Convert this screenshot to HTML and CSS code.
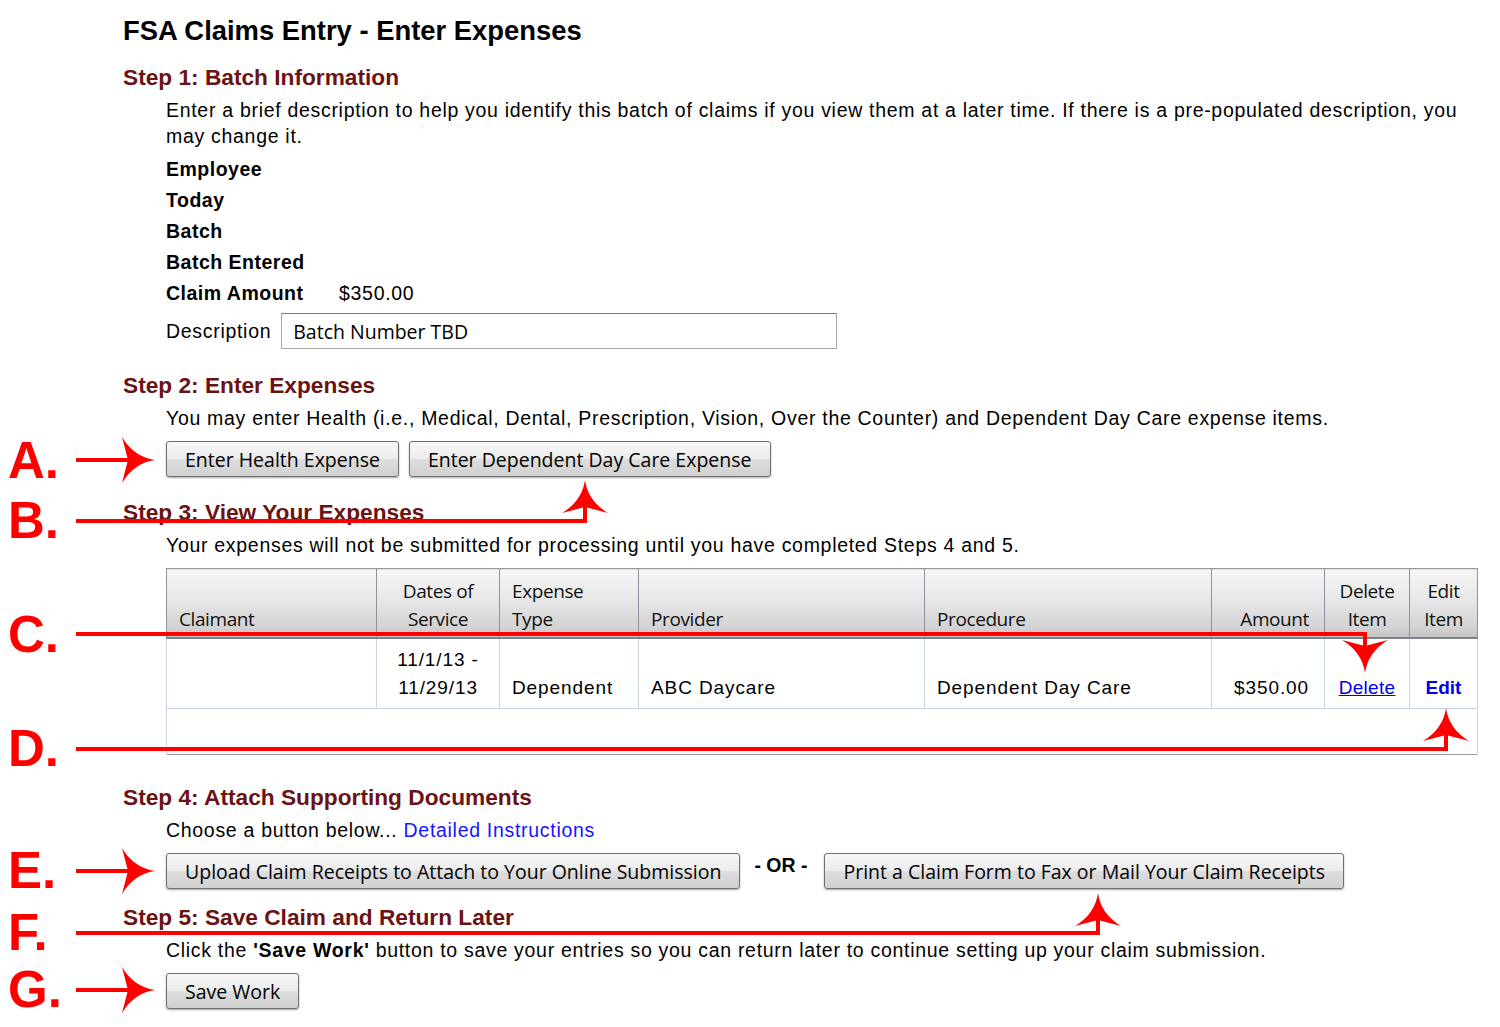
FILE: index.html
```html
<!DOCTYPE html>
<html lang="en">
<head>
  <meta charset="UTF-8" />
  <title>FSA Claims Entry - Enter Expenses</title>
  <link rel="stylesheet" href="styles.css">
</head>
<body>
  <div class="page">
    <h1>FSA Claims Entry - Enter Expenses</h1>

    <h2 class="step step-1">Step 1: Batch Information</h2>
    <div class="indent">
      <p class="intro">Enter a brief description to help you identify this batch of claims if you view them at a later time. If there is a pre-populated description, you may change it.</p>
      <div class="info">
        <div class="info-row"><span class="info-label">Employee</span><span></span></div>
        <div class="info-row"><span class="info-label">Today</span><span></span></div>
        <div class="info-row"><span class="info-label">Batch</span><span></span></div>
        <div class="info-row"><span class="info-label">Batch Entered</span><span></span></div>
        <div class="info-row"><span class="info-label">Claim Amount</span><span>$350.00</span></div>
      </div>
      <div class="desc-row">
        <label for="desc">Description</label>
        <input type="text" id="desc" value="Batch Number TBD">
      </div>
    </div>

    <h2 class="step step-2">Step 2: Enter Expenses</h2>
    <div class="indent">
      <p class="line">You may enter Health (i.e., Medical, Dental, Prescription, Vision, Over the Counter) and Dependent Day Care expense items.</p>
      <div class="btn-row">
        <button class="win-btn">Enter Health Expense</button>
        <button class="win-btn">Enter Dependent Day Care Expense</button>
      </div>
    </div>

    <h2 class="step step-3">Step 3: View Your Expenses</h2>
    <div class="indent">
      <p class="line">Your expenses will not be submitted for processing until you have completed Steps 4 and 5.</p>
      <table class="expenses">
        <colgroup>
          <col style="width:210px"><col style="width:123px"><col style="width:139px"><col style="width:286px">
          <col style="width:287px"><col style="width:113px"><col style="width:85px"><col style="width:68px">
        </colgroup>
        <thead>
          <tr>
            <th>Claimant</th>
            <th class="center">Dates of<br>Service</th>
            <th>Expense<br>Type</th>
            <th>Provider</th>
            <th>Procedure</th>
            <th class="right">Amount</th>
            <th class="center">Delete<br>Item</th>
            <th class="center">Edit<br>Item</th>
          </tr>
        </thead>
        <tbody>
          <tr class="data">
            <td></td>
            <td class="center">11/1/13 -<br>11/29/13</td>
            <td>Dependent</td>
            <td>ABC Daycare</td>
            <td>Dependent Day Care</td>
            <td class="right">$350.00</td>
            <td class="center"><a href="#" class="del-link">Delete</a></td>
            <td class="center"><a href="#" class="edit-link">Edit</a></td>
          </tr>
          <tr class="empty"><td colspan="8"></td></tr>
        </tbody>
      </table>
    </div>

    <h2 class="step step-4">Step 4: Attach Supporting Documents</h2>
    <div class="indent">
      <p class="line">Choose a button below... <a href="#" class="plain-link">Detailed Instructions</a></p>
      <div class="btn-row">
        <button class="win-btn">Upload Claim Receipts to Attach to Your Online Submission</button>
        <span class="or">- OR -</span>
        <button class="win-btn">Print a Claim Form to Fax or Mail Your Claim Receipts</button>
      </div>
    </div>

    <h2 class="step step-5">Step 5: Save Claim and Return Later</h2>
    <div class="indent">
      <p class="line line-5">Click the <strong>'Save Work'</strong> button to save your entries so you can return later to continue setting up your claim submission.</p>
      <div class="btn-row">
        <button class="win-btn">Save Work</button>
      </div>
    </div>
  </div>

  <!-- callout annotations drawn over the page -->
  <svg class="callouts" width="1500" height="1027" viewBox="0 0 1500 1027">
    <defs>
      <path id="head" d="M0 0 Q3 21 23 33 L0 27 L-23 33 Q-3 21 0 0 Z"/>
    </defs>
    <g class="letters">
      <text x="8" y="478">A.</text>
      <text x="8" y="538">B.</text>
      <text x="8" y="652">C.</text>
      <text x="8" y="766">D.</text>
      <text x="8" y="888">E.</text>
      <text x="8" y="950">F.</text>
      <text x="8" y="1007">G.</text>
    </g>
    <g class="lines">
      <polyline points="76,460 132,460"/>
      <polyline points="76,521 585,521 585,505"/>
      <polyline points="76,634 1365,634 1365,648"/>
      <polyline points="76,749 1446,749 1446,733"/>
      <polyline points="76,871 132,871"/>
      <polyline points="76,933 1098,933 1098,917"/>
      <polyline points="76,990 132,990"/>
    </g>
    <g class="heads">
      <use href="#head" transform="translate(155 460) rotate(90)"/>
      <use href="#head" transform="translate(585 480)"/>
      <use href="#head" transform="translate(1365 673) rotate(180)"/>
      <use href="#head" transform="translate(1446 708)"/>
      <use href="#head" transform="translate(155 871) rotate(90)"/>
      <use href="#head" transform="translate(1098 893)"/>
      <use href="#head" transform="translate(155 990) rotate(90)"/>
    </g>
  </svg>
</body>
</html>
```

FILE: styles.css
```css
*, *::before, *::after { box-sizing: border-box; }

body {
  margin: 0;
  font-family: 'Liberation Sans', Arial, sans-serif;
  color: #000;
  background: #fff;
  position: relative;
  width: 1500px;
  height: 1027px;
  overflow: hidden;
}

.page {
  padding: 12px 0 0 123px;
}

h1 {
  margin: 0;
  font-size: 27.4px;
  line-height: 38px;
  font-weight: bold;
}

.step {
  margin: 0;
  font-size: 22.7px;
  line-height: 30px;
  font-weight: bold;
  color: #6b1313;
}

.step-1 { margin-top: 12px; }
.step-2 { margin-top: 21px; }
.step-3 { margin-top: 20px; }
.step-4 { margin-top: 27px; }
.step-5 { margin-top: 13px; }

.indent {
  margin-left: 43px;
}

p {
  margin: 0;
  font-size: 19.5px;
  line-height: 26px;
  letter-spacing: 0.7px;
}

.intro {
  margin-top: 5px;
  width: 1300px;
}

.line {
  margin-top: 5px;
}

.info {
  margin-top: 5px;
}

.info-row {
  display: flex;
  height: 31px;
  align-items: center;
  font-size: 19.5px;
  letter-spacing: 0.7px;
}

.info-label {
  width: 173px;
  font-weight: bold;
  letter-spacing: 0.5px;
}

.desc-row {
  display: flex;
  align-items: center;
  gap: 10px;
  margin-top: 4px;
  font-size: 19.5px;
  letter-spacing: 0.7px;
}

.desc-row input {
  width: 556px;
  height: 36px;
  margin: 0;
  padding: 0 11px;
  border: 1px solid #a9a9a9;
  border-top-color: #7d7d7d;
  font-family: 'Open Sans', sans-serif;
  font-size: 19.5px;
  letter-spacing: 0;
  color: #000;
}

.btn-row {
  display: flex;
  align-items: center;
  gap: 10px;
  margin-top: 10px;
}

.win-btn {
  height: 36px;
  padding: 0 18px;
  margin: 0;
  font-family: 'Open Sans', sans-serif;
  font-size: 19.5px;
  color: #000;
  border: 1px solid #707070;
  border-radius: 3px;
  background: linear-gradient(#f7f7f7, #ececec 48%, #dddddd 52%, #d0d0d0);
  box-shadow: 0 1px 2px rgba(0, 0, 0, 0.35);
  cursor: pointer;
}

.or {
  font-weight: bold;
  font-size: 19.5px;
  margin: -12px 7px 0 4px;
}

.plain-link {
  color: #1515ff;
  text-decoration: none;
}

.expenses {
  margin-top: 10px;
  border-collapse: collapse;
  table-layout: fixed;
  width: 1311px;
  border: 1px solid #9a9a9a;
}

.expenses th {
  height: 69px;
  padding: 0 12px 4px;
  vertical-align: bottom;
  text-align: left;
  font-family: 'Open Sans', sans-serif;
  font-weight: normal;
  font-size: 19px;
  line-height: 28px;
  letter-spacing: -0.4px;
  color: #111;
  background: linear-gradient(#f6f6f6, #e9e9e9 40%, #d2d2d2 85%, #c4c4c4);
  border-left: 1px solid #8d929b;
  border-right: 1px solid #8d929b;
  border-bottom: 2px solid #7c828c;
}

.expenses td {
  padding: 0 12px 6px;
  vertical-align: bottom;
  font-size: 19px;
  line-height: 28px;
  letter-spacing: 0.9px;
  border-left: 1px solid #c8d3e3;
  border-right: 1px solid #c8d3e3;
}

.expenses .data td {
  height: 71px;
  border-bottom: 1px solid #c8d3e3;
}

.expenses .empty td {
  height: 46px;
}

.expenses .center { text-align: center; padding-left: 4px; padding-right: 4px; }
.expenses .right { text-align: right; padding-right: 15px; }

.del-link {
  color: #0000ee;
  text-decoration: underline;
  letter-spacing: 0.3px;
}

.edit-link {
  color: #0000ee;
  font-weight: bold;
  text-decoration: none;
  letter-spacing: 0;
}

strong {
  font-weight: bold;
}

.callouts {
  position: absolute;
  top: 0;
  left: 0;
  pointer-events: none;
}

.callouts .letters text {
  font-family: 'Liberation Sans', sans-serif;
  font-weight: bold;
  font-size: 51px;
  fill: #f00;
}

.callouts .lines polyline {
  fill: none;
  stroke: #f00;
  stroke-width: 4;
}

.callouts .heads use {
  fill: #f00;
}
```
